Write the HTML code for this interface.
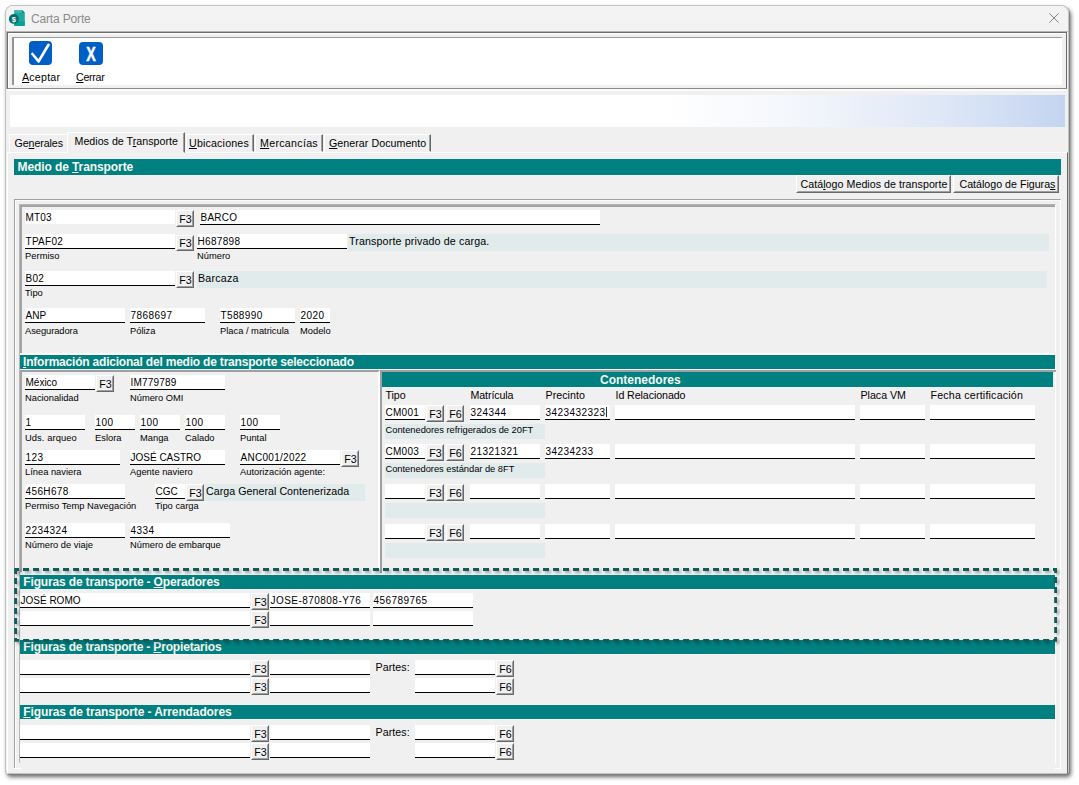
<!DOCTYPE html><html><head><meta charset="utf-8"><title>Carta Porte</title><style>
html,body{margin:0;padding:0;background:#fff;}
body{width:1079px;height:785px;position:relative;overflow:hidden;font-family:"Liberation Sans",sans-serif;font-size:11px;color:#000;}
div{position:absolute;box-sizing:border-box;white-space:nowrap;}
u{text-decoration:underline;text-underline-offset:1px;text-decoration-thickness:1px;}
.win{left:5px;top:5px;width:1064px;height:769px;background:#f0f0f0;border-radius:8px 8px 4px 4px;box-shadow:0 0 0 1px #c2c2c2 inset, 1px 1px 0 #808080, 2px 3px 4px rgba(0,0,0,.6);}
.t{color:#000;}
.fld{background:#fff;border-bottom:1px solid #000;}
.ro{background:#e2ebec;}
.btn{background:#f0f0f0;border:1px solid;border-color:#fff #696969 #696969 #fff;}
.btn:after{content:"";position:absolute;right:0;bottom:0;left:0;top:0;border:1px solid;border-color:transparent #a0a0a0 #a0a0a0 transparent;}
.hdr{background:#008080;}
.hb{color:#f7f7f2;font-weight:bold;}
</style></head><body>
<div class="win"></div>
<div class="" style="left:6px;top:6px;width:1062px;height:25px;background:#f3f3f3;border-radius:7px 7px 0 0;"></div>
<svg style="position:absolute;left:8px;top:9px" width="18" height="18" viewBox="8 9 18 18">
<path d="M14.2 11 Q14.2 10 15.2 10 L22 10 L24.8 12.8 L24.8 24.9 Q24.8 25.9 23.8 25.9 L15.2 25.9 Q14.2 25.9 14.2 24.9 Z" fill="#1fa99e"/>
<path d="M14.2 11 Q14.2 10 15.2 10 L22 10 L22 12.6 L14.2 12.6 Z" fill="#45b9ae"/>
<path d="M14.2 21.5 L24.8 21.5 L24.8 24.9 Q24.8 25.9 23.8 25.9 L15.2 25.9 Q14.2 25.9 14.2 24.9 Z" fill="#05a098"/>
<path d="M22 10 L24.8 12.8 L22 12.8 Z" fill="#0a857d"/>
<circle cx="13.85" cy="18.9" r="4.95" fill="#066f6b"/>
<text x="13.9" y="21.6" font-family="Liberation Sans, sans-serif" font-size="7.6" font-weight="bold" fill="#fff" text-anchor="middle">$</text>
</svg>
<div class="t " style="left:31px;top:12px;font-size:12px;line-height:14px;letter-spacing:-0.158px;color:#8b8b8b;">Carta Porte</div>
<svg style="position:absolute;left:1049px;top:13px" width="10" height="10" viewBox="0 0 10 10"><path d="M0.3 0.3 L9.7 9.7 M9.7 0.3 L0.3 9.7" stroke="#858585" stroke-width="1" fill="none"/></svg>
<div class="" style="left:6px;top:31px;width:1062px;height:1px;background:#b4b4b4;"></div>
<div class="" style="left:6px;top:32px;width:1px;height:57px;background:#b0b0b0;"></div>
<div class="" style="left:7px;top:32px;width:1060px;height:57px;border:1px solid #6c6c6c;border-bottom-color:#8a8a8a;background:#f0f0f0;box-shadow:inset 1px 1px 0 #fff;"></div>
<div class="" style="left:7px;top:89px;width:1060px;height:2px;background:#fbfbfb;"></div>
<div class="" style="left:12px;top:37px;width:1050px;height:48px;background:#fff;border-left:2px solid #949494;border-top:1px solid #9a9a9a;"></div>
<svg style="position:absolute;left:29px;top:41px" width="23" height="24" viewBox="0 0 23 24"><rect x="0" y="0" width="23" height="24" rx="4" fill="#005fc4"/><path d="M3.4 13 L9.6 20.4 L19.5 3.8" stroke="#fff" stroke-width="2.7" fill="none" stroke-linecap="round" stroke-linejoin="round"/></svg>
<svg style="position:absolute;left:79px;top:42px" width="24" height="23" viewBox="0 0 24 23"><rect x="0" y="0" width="24" height="23" rx="4" fill="#005fc4"/><text x="12" y="19.2" font-family="Liberation Sans, sans-serif" font-size="21" font-weight="bold" fill="#fff" stroke="#fff" stroke-width="0.5" text-anchor="middle" textLength="9.5" lengthAdjust="spacingAndGlyphs">X</text></svg>
<div class="t " style="left:22px;top:71px;font-size:10.67px;line-height:12px;letter-spacing:0.21px;"><u>A</u>ceptar</div>
<div class="t " style="left:76px;top:71px;font-size:10.67px;line-height:12px;letter-spacing:-0.283px;"><u>C</u>errar</div>
<div class="" style="left:10px;top:95px;width:1055px;height:32px;background:linear-gradient(to right,#fff 0%,#fff 62%,#f4f7fc 74%,#dfe8f7 88%,#c4d4f0 100%);"></div>
<div class="" style="left:7px;top:152px;width:1061px;height:622px;border:1px solid;border-color:#fff #696969 transparent #fff;"></div>
<div class="" style="left:9px;top:134px;width:58px;height:18px;border:1px solid;border-color:#fff #696969 transparent #fff;"></div>
<div class="" style="left:65px;top:135px;width:1px;height:16px;background:#a0a0a0;"></div>
<div class="" style="left:186px;top:134px;width:68px;height:18px;border:1px solid;border-color:#fff #696969 transparent #fff;"></div>
<div class="" style="left:252px;top:135px;width:1px;height:16px;background:#a0a0a0;"></div>
<div class="" style="left:255px;top:134px;width:68px;height:18px;border:1px solid;border-color:#fff #696969 transparent #fff;"></div>
<div class="" style="left:321px;top:135px;width:1px;height:16px;background:#a0a0a0;"></div>
<div class="" style="left:324px;top:134px;width:107px;height:18px;border:1px solid;border-color:#fff #696969 transparent #fff;"></div>
<div class="" style="left:429px;top:135px;width:1px;height:16px;background:#a0a0a0;"></div>
<div class="" style="left:9px;top:134px;width:58px;height:18px;background:#f0f0f0;border:1px solid;border-color:#fff #f0f0f0 transparent #fff;"></div>
<div class="t " style="left:14.5px;top:137px;font-size:10.67px;line-height:12px;letter-spacing:-0.087px;">Ge<u>n</u>erales</div>
<div class="" style="left:67px;top:132px;width:118px;height:21px;background:#f0f0f0;border:1px solid;border-color:#fff #696969 transparent #fff;"></div>
<div class="" style="left:183px;top:133px;width:1px;height:19px;background:#a0a0a0;"></div>
<div class="t " style="left:74.5px;top:135px;font-size:10.67px;line-height:12px;letter-spacing:0.016px;">Medios de T<u>r</u>ansporte</div>
<div class="t " style="left:189px;top:137px;font-size:10.67px;line-height:12px;letter-spacing:0.168px;"><u>U</u>bicaciones</div>
<div class="t " style="left:260px;top:137px;font-size:10.67px;line-height:12px;letter-spacing:0.291px;"><u>M</u>ercancías</div>
<div class="t " style="left:329px;top:137px;font-size:10.67px;line-height:12px;letter-spacing:0.044px;"><u>G</u>enerar Documento</div>
<div class="hdr" style="left:14px;top:159px;width:1047px;height:16px;"></div>
<div class="t hb" style="left:17.5px;top:160px;font-size:12px;line-height:14px;letter-spacing:-0.092px;">Medio de <u>T</u>ransporte</div>
<div class="btn" style="left:796px;top:175px;width:155px;height:18px;"></div>
<div class="t " style="left:800.5px;top:178px;font-size:10.67px;line-height:12px;letter-spacing:0.04px;">Catá<u>l</u>ogo Medios de transporte</div>
<div class="btn" style="left:953px;top:175px;width:106px;height:18px;"></div>
<div class="t " style="left:959.5px;top:178px;font-size:10.67px;line-height:12px;letter-spacing:-0.003px;">Catálogo de Figura<u>s</u></div>
<div class="" style="left:14px;top:199px;width:1047px;height:570px;border:1px solid #a0a0a0;border-right-color:#fff;border-bottom:none;box-shadow:inset 1px 1px 0 #fbfbfb;"></div>
<div class="" style="left:14px;top:768px;width:7px;height:1px;background:#fff;"></div>
<div class="" style="left:1055px;top:768px;width:6px;height:1px;background:#fff;"></div>
<div class="" style="left:19px;top:204px;width:1037px;height:560px;border:1px solid #b6b6b6;border-right:1px solid #fff;border-bottom:none;"></div>
<div class="" style="left:20px;top:205px;width:1035px;height:559px;border:2px solid #a3a3a3;border-right:none;border-bottom:none;"></div>
<div class="" style="left:20px;top:353px;width:1035px;height:2px;background:#fff;"></div>
<div class="" style="left:20px;top:369px;width:1035px;height:1px;background:#f8f8f8;"></div>
<div class="" style="left:20px;top:572px;width:2px;height:192px;background:#f0f0f0;"></div>
<div class="" style="left:19px;top:763px;width:1px;height:1px;background:#fff;"></div>
<div class="fld" style="left:25px;top:210px;width:150px;height:14px;border:none;"></div>
<div class="t " style="left:25.5px;top:212px;font-size:10px;line-height:11px;letter-spacing:0.172px;">MT03</div>
<div class="btn" style="left:176px;top:210px;width:18px;height:17px;"></div>
<div class="t " style="left:179.3px;top:213px;font-size:10.67px;line-height:12px;">F3</div>
<div class="fld" style="left:200px;top:210px;width:400px;height:15px;"></div>
<div class="t " style="left:200.5px;top:212px;font-size:10px;line-height:11px;letter-spacing:0.237px;">BARCO</div>
<div class="fld" style="left:25px;top:234px;width:150px;height:15px;"></div>
<div class="t " style="left:25.5px;top:236px;font-size:10px;line-height:11px;letter-spacing:0.269px;">TPAF02</div>
<div class="btn" style="left:176px;top:235px;width:18px;height:16px;"></div>
<div class="t " style="left:179.3px;top:237px;font-size:10.67px;line-height:12px;">F3</div>
<div class="fld" style="left:197px;top:234px;width:150px;height:15px;"></div>
<div class="t " style="left:197.5px;top:236px;font-size:10px;line-height:11px;letter-spacing:0.322px;">H687898</div>
<div class="ro" style="left:348px;top:234px;width:701px;height:17px;"></div>
<div class="t " style="left:349px;top:235px;font-size:10.67px;line-height:12px;letter-spacing:0.142px;">Transporte privado de carga.</div>
<div class="t " style="left:25px;top:251px;font-size:9.33px;line-height:10px;letter-spacing:0.053px;">Permiso</div>
<div class="t " style="left:197px;top:251px;font-size:9.33px;line-height:10px;">Número</div>
<div class="fld" style="left:25px;top:271px;width:150px;height:15px;"></div>
<div class="t " style="left:25.5px;top:273px;font-size:10px;line-height:11px;letter-spacing:0.293px;">B02</div>
<div class="btn" style="left:176px;top:271px;width:18px;height:17px;"></div>
<div class="t " style="left:179.3px;top:274px;font-size:10.67px;line-height:12px;">F3</div>
<div class="ro" style="left:197px;top:271px;width:850px;height:17px;"></div>
<div class="t " style="left:198px;top:272px;font-size:10.67px;line-height:12px;letter-spacing:0.216px;">Barcaza</div>
<div class="t " style="left:25px;top:288px;font-size:9.33px;line-height:10px;">Tipo</div>
<div class="fld" style="left:25px;top:308px;width:100px;height:15px;"></div>
<div class="t " style="left:25.5px;top:310px;font-size:10px;line-height:11px;">ANP</div>
<div class="fld" style="left:130px;top:308px;width:75px;height:15px;"></div>
<div class="t " style="left:130.5px;top:310px;font-size:10px;line-height:11px;letter-spacing:0.44px;">7868697</div>
<div class="fld" style="left:220px;top:308px;width:75px;height:15px;"></div>
<div class="t " style="left:220.5px;top:310px;font-size:10px;line-height:11px;letter-spacing:0.377px;">T588990</div>
<div class="fld" style="left:300px;top:308px;width:30px;height:15px;"></div>
<div class="t " style="left:300.5px;top:310px;font-size:10px;line-height:11px;letter-spacing:0.44px;">2020</div>
<div class="t " style="left:25px;top:326px;font-size:9.33px;line-height:10px;letter-spacing:-0.057px;">Aseguradora</div>
<div class="t " style="left:130px;top:326px;font-size:9.33px;line-height:10px;">Póliza</div>
<div class="t " style="left:220px;top:326px;font-size:9.33px;line-height:10px;">Placa / matricula</div>
<div class="t " style="left:300px;top:326px;font-size:9.33px;line-height:10px;">Modelo</div>
<div class="hdr" style="left:20px;top:355px;width:1035px;height:14px;"></div>
<div class="t hb" style="left:23px;top:355px;font-size:12px;line-height:14px;letter-spacing:-0.206px;"><u>I</u>nformación adicional del medio de transporte seleccionado</div>
<div class="" style="left:20px;top:370px;width:360px;height:200px;border-top:2px solid #a0a0a0;border-right:2px solid #fff;"></div>
<div class="fld" style="left:25px;top:375px;width:70px;height:15px;"></div>
<div class="t " style="left:25.5px;top:377px;font-size:10px;line-height:11px;">México</div>
<div class="btn" style="left:96px;top:375px;width:18px;height:17px;"></div>
<div class="t " style="left:99.3px;top:378px;font-size:10.67px;line-height:12px;">F3</div>
<div class="fld" style="left:130px;top:375px;width:95px;height:15px;"></div>
<div class="t " style="left:130.5px;top:377px;font-size:10px;line-height:11px;letter-spacing:0.208px;">IM779789</div>
<div class="t " style="left:25px;top:393px;font-size:9.33px;line-height:10px;letter-spacing:-0.02px;">Nacionalidad</div>
<div class="t " style="left:130px;top:393px;font-size:9.33px;line-height:10px;letter-spacing:-0.01px;">Número OMI</div>
<div class="fld" style="left:25px;top:415px;width:60px;height:15px;"></div>
<div class="t " style="left:25.5px;top:417px;font-size:10px;line-height:11px;letter-spacing:0.44px;">1</div>
<div class="fld" style="left:95px;top:415px;width:40px;height:15px;"></div>
<div class="t " style="left:95.5px;top:417px;font-size:10px;line-height:11px;letter-spacing:0.44px;">100</div>
<div class="fld" style="left:140px;top:415px;width:40px;height:15px;"></div>
<div class="t " style="left:140.5px;top:417px;font-size:10px;line-height:11px;letter-spacing:0.44px;">100</div>
<div class="fld" style="left:185px;top:415px;width:40px;height:15px;"></div>
<div class="t " style="left:185.5px;top:417px;font-size:10px;line-height:11px;letter-spacing:0.44px;">100</div>
<div class="fld" style="left:240px;top:415px;width:40px;height:15px;"></div>
<div class="t " style="left:240.5px;top:417px;font-size:10px;line-height:11px;letter-spacing:0.44px;">100</div>
<div class="t " style="left:25px;top:433px;font-size:9.33px;line-height:10px;letter-spacing:0.088px;">Uds. arqueo</div>
<div class="t " style="left:95px;top:433px;font-size:9.33px;line-height:10px;">Eslora</div>
<div class="t " style="left:140px;top:433px;font-size:9.33px;line-height:10px;">Manga</div>
<div class="t " style="left:185px;top:433px;font-size:9.33px;line-height:10px;">Calado</div>
<div class="t " style="left:240px;top:433px;font-size:9.33px;line-height:10px;">Puntal</div>
<div class="fld" style="left:25px;top:450px;width:95px;height:15px;"></div>
<div class="t " style="left:25.5px;top:452px;font-size:10px;line-height:11px;letter-spacing:0.44px;">123</div>
<div class="fld" style="left:130px;top:450px;width:95px;height:15px;"></div>
<div class="t " style="left:130.5px;top:452px;font-size:10px;line-height:11px;">JOSÉ CASTRO</div>
<div class="fld" style="left:240px;top:450px;width:100px;height:15px;"></div>
<div class="t " style="left:240.5px;top:452px;font-size:10px;line-height:11px;letter-spacing:0.28px;">ANC001/2022</div>
<div class="btn" style="left:341px;top:450px;width:18px;height:17px;"></div>
<div class="t " style="left:344.3px;top:453px;font-size:10.67px;line-height:12px;">F3</div>
<div class="t " style="left:25px;top:467px;font-size:9.33px;line-height:10px;">Línea naviera</div>
<div class="t " style="left:130px;top:467px;font-size:9.33px;line-height:10px;">Agente naviero</div>
<div class="t " style="left:240px;top:467px;font-size:9.33px;line-height:10px;">Autorización agente:</div>
<div class="fld" style="left:25px;top:484px;width:100px;height:15px;"></div>
<div class="t " style="left:25.5px;top:486px;font-size:10px;line-height:11px;letter-spacing:0.377px;">456H678</div>
<div class="fld" style="left:155px;top:484px;width:30px;height:15px;"></div>
<div class="t " style="left:155.5px;top:486px;font-size:10px;line-height:11px;">CGC</div>
<div class="btn" style="left:186px;top:484px;width:18px;height:17px;"></div>
<div class="t " style="left:189.3px;top:487px;font-size:10.67px;line-height:12px;">F3</div>
<div class="ro" style="left:205px;top:484px;width:160px;height:17px;"></div>
<div class="t " style="left:206px;top:485px;font-size:10.67px;line-height:12px;letter-spacing:0.038px;">Carga General Contenerizada</div>
<div class="t " style="left:25px;top:501px;font-size:9.33px;line-height:10px;">Permiso Temp Navegación</div>
<div class="t " style="left:155px;top:501px;font-size:9.33px;line-height:10px;">Tipo carga</div>
<div class="fld" style="left:25px;top:523px;width:100px;height:15px;"></div>
<div class="t " style="left:25.5px;top:525px;font-size:10px;line-height:11px;letter-spacing:0.44px;">2234324</div>
<div class="fld" style="left:130px;top:523px;width:100px;height:15px;"></div>
<div class="t " style="left:130.5px;top:525px;font-size:10px;line-height:11px;letter-spacing:0.44px;">4334</div>
<div class="t " style="left:25px;top:540px;font-size:9.33px;line-height:10px;">Número de viaje</div>
<div class="t " style="left:130px;top:540px;font-size:9.33px;line-height:10px;">Número de embarque</div>
<div class="" style="left:380px;top:370px;width:676px;height:203px;border-left:2px solid #a0a0a0;border-top:2px solid #a0a0a0;"></div>
<div class="hdr" style="left:382px;top:372px;width:671px;height:15px;"></div>
<div class="t hb" style="left:600px;top:373px;font-size:12px;line-height:14px;letter-spacing:0.003px;">Contenedores</div>
<div class="t " style="left:385.5px;top:389px;font-size:10.67px;line-height:12px;letter-spacing:-0.084px;">Tipo</div>
<div class="t " style="left:470.5px;top:389px;font-size:10.67px;line-height:12px;letter-spacing:-0.102px;">Matrícula</div>
<div class="t " style="left:545.5px;top:389px;font-size:10.67px;line-height:12px;letter-spacing:0.052px;">Precinto</div>
<div class="t " style="left:615.5px;top:389px;font-size:10.67px;line-height:12px;letter-spacing:-0.085px;">Id Relacionado</div>
<div class="t " style="left:860.5px;top:389px;font-size:10.67px;line-height:12px;letter-spacing:-0.025px;">Placa VM</div>
<div class="t " style="left:930.5px;top:389px;font-size:10.67px;line-height:12px;letter-spacing:0.198px;">Fecha certificación</div>
<div class="fld" style="left:385px;top:405px;width:40px;height:15px;"></div>
<div class="t " style="left:385.5px;top:407px;font-size:10px;line-height:11px;letter-spacing:0.264px;">CM001</div>
<div class="btn" style="left:426px;top:405px;width:18px;height:17px;"></div>
<div class="t " style="left:429.3px;top:408px;font-size:10.67px;line-height:12px;">F3</div>
<div class="btn" style="left:446px;top:405px;width:18px;height:17px;"></div>
<div class="t " style="left:449.3px;top:408px;font-size:10.67px;line-height:12px;">F6</div>
<div class="fld" style="left:470px;top:405px;width:70px;height:15px;"></div>
<div class="t " style="left:470.5px;top:407px;font-size:10px;line-height:11px;letter-spacing:0.44px;">324344</div>
<div class="fld" style="left:545px;top:405px;width:65px;height:15px;"></div>
<div class="t " style="left:545.5px;top:407px;font-size:10px;line-height:11px;letter-spacing:0.44px;">3423432323</div>
<div class="fld" style="left:615px;top:405px;width:240px;height:15px;"></div>
<div class="fld" style="left:860px;top:405px;width:65px;height:15px;"></div>
<div class="fld" style="left:930px;top:405px;width:105px;height:15px;"></div>
<div class="ro" style="left:385px;top:424px;width:160px;height:15px;"></div>
<div class="t " style="left:385.5px;top:425px;font-size:9.33px;line-height:10px;letter-spacing:-0.016px;">Contenedores refrigerados de 20FT</div>
<div class="fld" style="left:385px;top:444px;width:40px;height:15px;"></div>
<div class="t " style="left:385.5px;top:446px;font-size:10px;line-height:11px;letter-spacing:0.264px;">CM003</div>
<div class="btn" style="left:426px;top:444px;width:18px;height:17px;"></div>
<div class="t " style="left:429.3px;top:447px;font-size:10.67px;line-height:12px;">F3</div>
<div class="btn" style="left:446px;top:444px;width:18px;height:17px;"></div>
<div class="t " style="left:449.3px;top:447px;font-size:10.67px;line-height:12px;">F6</div>
<div class="fld" style="left:470px;top:444px;width:70px;height:15px;"></div>
<div class="t " style="left:470.5px;top:446px;font-size:10px;line-height:11px;letter-spacing:0.44px;">21321321</div>
<div class="fld" style="left:545px;top:444px;width:65px;height:15px;"></div>
<div class="t " style="left:545.5px;top:446px;font-size:10px;line-height:11px;letter-spacing:0.44px;">34234233</div>
<div class="fld" style="left:615px;top:444px;width:240px;height:15px;"></div>
<div class="fld" style="left:860px;top:444px;width:65px;height:15px;"></div>
<div class="fld" style="left:930px;top:444px;width:105px;height:15px;"></div>
<div class="ro" style="left:385px;top:463px;width:160px;height:15px;"></div>
<div class="t " style="left:385.5px;top:464px;font-size:9.33px;line-height:10px;letter-spacing:-0.03px;">Contenedores estándar de 8FT</div>
<div class="fld" style="left:385px;top:484px;width:40px;height:15px;"></div>
<div class="btn" style="left:426px;top:484px;width:18px;height:17px;"></div>
<div class="t " style="left:429.3px;top:487px;font-size:10.67px;line-height:12px;">F3</div>
<div class="btn" style="left:446px;top:484px;width:18px;height:17px;"></div>
<div class="t " style="left:449.3px;top:487px;font-size:10.67px;line-height:12px;">F6</div>
<div class="fld" style="left:470px;top:484px;width:70px;height:15px;"></div>
<div class="fld" style="left:545px;top:484px;width:65px;height:15px;"></div>
<div class="fld" style="left:615px;top:484px;width:240px;height:15px;"></div>
<div class="fld" style="left:860px;top:484px;width:65px;height:15px;"></div>
<div class="fld" style="left:930px;top:484px;width:105px;height:15px;"></div>
<div class="ro" style="left:385px;top:503px;width:160px;height:15px;"></div>
<div class="fld" style="left:385px;top:524px;width:40px;height:15px;"></div>
<div class="btn" style="left:426px;top:524px;width:18px;height:17px;"></div>
<div class="t " style="left:429.3px;top:527px;font-size:10.67px;line-height:12px;">F3</div>
<div class="btn" style="left:446px;top:524px;width:18px;height:17px;"></div>
<div class="t " style="left:449.3px;top:527px;font-size:10.67px;line-height:12px;">F6</div>
<div class="fld" style="left:470px;top:524px;width:70px;height:15px;"></div>
<div class="fld" style="left:545px;top:524px;width:65px;height:15px;"></div>
<div class="fld" style="left:615px;top:524px;width:240px;height:15px;"></div>
<div class="fld" style="left:860px;top:524px;width:65px;height:15px;"></div>
<div class="fld" style="left:930px;top:524px;width:105px;height:15px;"></div>
<div class="ro" style="left:385px;top:543px;width:160px;height:15px;"></div>
<div class="" style="left:606px;top:407px;width:1px;height:10px;background:#333;"></div>
<div class="hdr" style="left:20px;top:575px;width:1035px;height:14px;"></div>
<div class="t hb" style="left:23.3px;top:575px;font-size:12px;line-height:14px;letter-spacing:-0.155px;">Figuras de transporte - <u>O</u>peradores</div>
<div class="fld" style="left:20px;top:593px;width:230px;height:15px;"></div>
<div class="t " style="left:20.5px;top:595px;font-size:10px;line-height:11px;">JOSÉ ROMO</div>
<div class="btn" style="left:251px;top:593px;width:18px;height:17px;"></div>
<div class="t " style="left:254.3px;top:596px;font-size:10.67px;line-height:12px;">F3</div>
<div class="fld" style="left:270px;top:593px;width:100px;height:15px;"></div>
<div class="t " style="left:270.5px;top:595px;font-size:10px;line-height:11px;letter-spacing:0.46px;">JOSE-870808-Y76</div>
<div class="fld" style="left:373px;top:593px;width:100px;height:15px;"></div>
<div class="t " style="left:373.5px;top:595px;font-size:10px;line-height:11px;letter-spacing:0.44px;">456789765</div>
<div class="fld" style="left:20px;top:611px;width:230px;height:15px;"></div>
<div class="btn" style="left:251px;top:611px;width:18px;height:17px;"></div>
<div class="t " style="left:254.3px;top:614px;font-size:10.67px;line-height:12px;">F3</div>
<div class="fld" style="left:270px;top:611px;width:100px;height:15px;"></div>
<div class="fld" style="left:373px;top:611px;width:100px;height:15px;"></div>
<div class="hdr" style="left:20px;top:640px;width:1035px;height:14px;"></div>
<div class="t hb" style="left:23.3px;top:640px;font-size:12px;line-height:14px;letter-spacing:-0.165px;">Figuras de transporte - <u>P</u>ropietarios</div>
<div class="fld" style="left:20px;top:660px;width:230px;height:15px;"></div>
<div class="btn" style="left:251px;top:660px;width:18px;height:17px;"></div>
<div class="t " style="left:254.3px;top:663px;font-size:10.67px;line-height:12px;">F3</div>
<div class="fld" style="left:270px;top:660px;width:100px;height:15px;"></div>
<div class="fld" style="left:415px;top:660px;width:80px;height:15px;"></div>
<div class="btn" style="left:496px;top:660px;width:18px;height:17px;"></div>
<div class="t " style="left:499.3px;top:663px;font-size:10.67px;line-height:12px;">F6</div>
<div class="fld" style="left:20px;top:678px;width:230px;height:15px;"></div>
<div class="btn" style="left:251px;top:678px;width:18px;height:17px;"></div>
<div class="t " style="left:254.3px;top:681px;font-size:10.67px;line-height:12px;">F3</div>
<div class="fld" style="left:270px;top:678px;width:100px;height:15px;"></div>
<div class="fld" style="left:415px;top:678px;width:80px;height:15px;"></div>
<div class="btn" style="left:496px;top:678px;width:18px;height:17px;"></div>
<div class="t " style="left:499.3px;top:681px;font-size:10.67px;line-height:12px;">F6</div>
<div class="t " style="left:375.5px;top:661px;font-size:10.67px;line-height:12px;letter-spacing:0.077px;">Partes:</div>
<div class="hdr" style="left:20px;top:705px;width:1035px;height:14px;"></div>
<div class="t hb" style="left:23.3px;top:705px;font-size:12px;line-height:14px;letter-spacing:-0.113px;"><u>F</u>iguras de transporte - Arrendadores</div>
<div class="fld" style="left:20px;top:725px;width:230px;height:15px;"></div>
<div class="btn" style="left:251px;top:725px;width:18px;height:17px;"></div>
<div class="t " style="left:254.3px;top:728px;font-size:10.67px;line-height:12px;">F3</div>
<div class="fld" style="left:270px;top:725px;width:100px;height:15px;"></div>
<div class="fld" style="left:415px;top:725px;width:80px;height:15px;"></div>
<div class="btn" style="left:496px;top:725px;width:18px;height:17px;"></div>
<div class="t " style="left:499.3px;top:728px;font-size:10.67px;line-height:12px;">F6</div>
<div class="fld" style="left:20px;top:743px;width:230px;height:15px;"></div>
<div class="btn" style="left:251px;top:743px;width:18px;height:17px;"></div>
<div class="t " style="left:254.3px;top:746px;font-size:10.67px;line-height:12px;">F3</div>
<div class="fld" style="left:270px;top:743px;width:100px;height:15px;"></div>
<div class="fld" style="left:415px;top:743px;width:80px;height:15px;"></div>
<div class="btn" style="left:496px;top:743px;width:18px;height:17px;"></div>
<div class="t " style="left:499.3px;top:746px;font-size:10.67px;line-height:12px;">F6</div>
<div class="t " style="left:375.5px;top:726px;font-size:10.67px;line-height:12px;letter-spacing:0.077px;">Partes:</div>
<div class="" style="left:20px;top:589px;width:1035px;height:1px;background:#fafafa;"></div>
<div class="" style="left:20px;top:654px;width:1035px;height:1px;background:#fafafa;"></div>
<div class="" style="left:20px;top:719px;width:1035px;height:1px;background:#fafafa;"></div>
<svg style="position:absolute;left:8px;top:562px;overflow:visible" width="1060" height="90" viewBox="8 562 1060 90">
<defs><filter id="sh" x="-5%" y="-20%" width="110%" height="150%"><feGaussianBlur in="SourceAlpha" stdDeviation="1.4"/><feOffset dx="2" dy="2"/><feComponentTransfer><feFuncA type="linear" slope="0.34"/></feComponentTransfer><feMerge><feMergeNode/><feMergeNode in="SourceGraphic"/></feMerge></filter></defs>
<rect x="15.6" y="569.5" width="1040" height="70.9" fill="none" stroke="#0b5c5c" stroke-width="2.8" stroke-dasharray="6 4" stroke-dashoffset="2.6" filter="url(#sh)"/>
</svg>
</body></html>
